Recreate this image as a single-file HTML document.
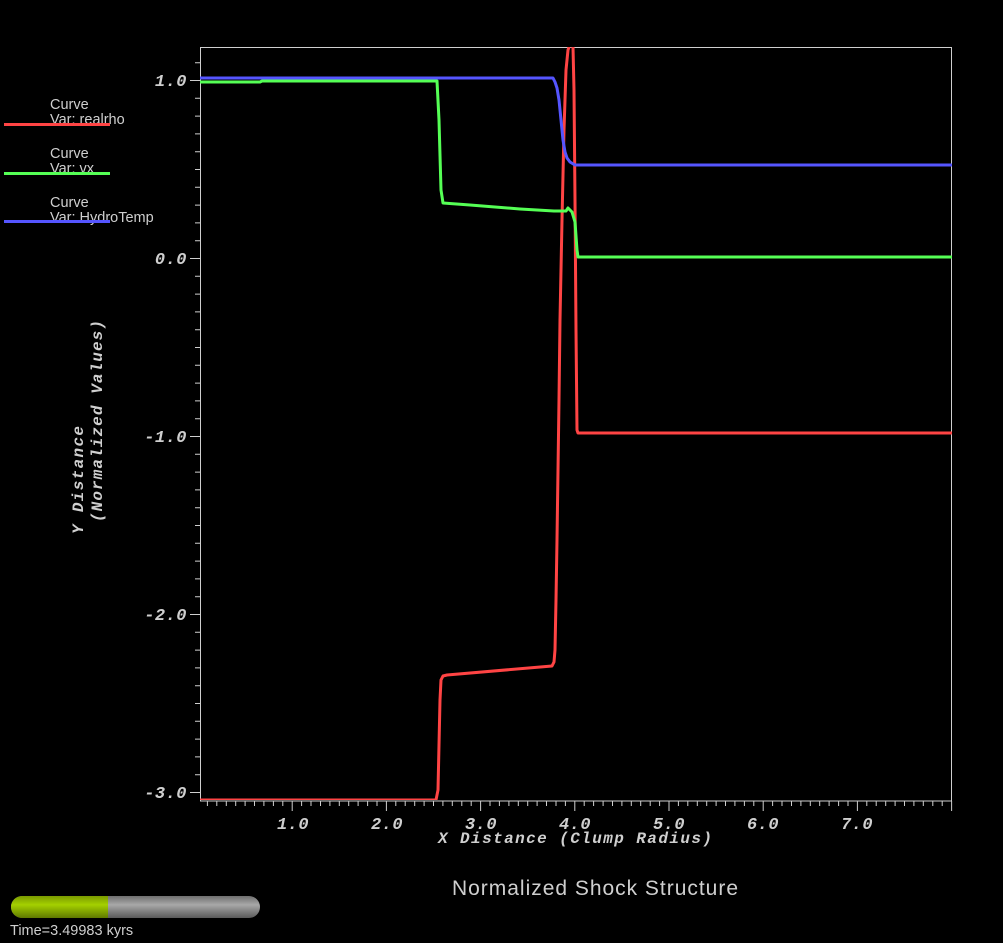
<!DOCTYPE html>
<html><head><meta charset="utf-8"><style>
html,body{margin:0;padding:0;background:#000;}
svg{display:block}
.mono{font-family:"Liberation Mono",monospace;font-weight:bold;font-style:italic;fill:#cfcfcf;}
.sans{font-family:"Liberation Sans",sans-serif;fill:#cfcfcf;}
</style></head><body>
<svg id="s" width="1003" height="943" viewBox="0 0 1003 943" xmlns="http://www.w3.org/2000/svg">
<defs>
<linearGradient id="gg" x1="0" y1="0" x2="0" y2="1">
<stop offset="0" stop-color="#6f6f6f"/><stop offset="0.4" stop-color="#a8a8a8"/><stop offset="1" stop-color="#5a5a5a"/></linearGradient>
<linearGradient id="gy" x1="0" y1="0" x2="0" y2="1">
<stop offset="0" stop-color="#7a9a00"/><stop offset="0.4" stop-color="#a4d000"/><stop offset="1" stop-color="#5f7800"/></linearGradient>
<clipPath id="pc"><rect x="200" y="47" width="752" height="753"/></clipPath>
</defs>
<g id="axes" stroke="#cfcfcf" stroke-width="1" fill="none">
<path d="M200.5 47.5H951.5V800.5M200.5 47V801H952"/>
</g>
<g clip-path="url(#pc)" fill="none" stroke-width="3" stroke-linejoin="round">
<path stroke="#ff4444" d="M200 800 L436 800 L438 790 L440 700 L441 680 L443 676 L447 675 L552 666 L554 662 L555 650 L556 600 L557 540 L558 470 L559 400 L560 320 L562 220 L564 130 L566 70 L568 50 L570 44 L573 47 L574 90 L575 200 L576 330 L577 430 L578 433 L952 433"/>
<path stroke="#55ff55" d="M200 82 L260 82 L262 81 L437 81 L439 120 L441 190 L443 203 L470 205 L520 209 L554 211 L566 211 L568 208 L572 212 L575 222 L577 250 L578 257 L952 257"/>
<path stroke="#5555ff" d="M200 78 L553 78 L555 82 L557 88 L559 100 L561 120 L563 140 L565 152 L567 158 L570 162 L575 165 L952 165"/>
</g>
<g class="mono" font-size="17" letter-spacing="0.5" text-anchor="end">
<text x="187" y="86">1.0</text>
<text x="187" y="264">0.0</text>
<text x="187" y="442">-1.0</text>
<text x="187" y="620">-2.0</text>
<text x="187" y="798">-3.0</text>
</g>
<g class="mono" font-size="17" letter-spacing="0.5" text-anchor="middle">
<text x="293" y="829">1.0</text><text x="387" y="829">2.0</text><text x="481" y="829">3.0</text><text x="575" y="829">4.0</text><text x="669" y="829">5.0</text><text x="763" y="829">6.0</text><text x="857" y="829">7.0</text>
</g>
<text class="mono" font-size="16" x="438" y="843" textLength="274">X Distance (Clump Radius)</text>
<text class="mono" font-size="16" transform="translate(83,534) rotate(-90)" textLength="108">Y Distance</text>
<text class="mono" font-size="16" transform="translate(102,522) rotate(-90)" textLength="202">(Normalized Values)</text>
<g class="sans" font-size="14.5">
<text x="50" y="109">Curve</text><text x="50" y="124">Var: realrho</text>
<text x="50" y="158">Curve</text><text x="50" y="173">Var: vx</text>
<text x="50" y="207">Curve</text><text x="50" y="222">Var: HydroTemp</text>
<text x="10" y="935">Time=3.49983 kyrs</text>
</g>
<rect x="4" y="123" width="106" height="3" fill="#ff4444"/>
<rect x="4" y="172" width="106" height="3" fill="#55ff55"/>
<rect x="4" y="220" width="106" height="3" fill="#5555ff"/>
<text class="sans" font-size="21" x="452" y="895" textLength="286">Normalized Shock Structure</text>
<rect x="11" y="896" width="249" height="22" rx="11" fill="url(#gg)"/>
<path d="M108 896 H22 A11 11 0 0 0 22 918 H108Z" fill="url(#gy)"/>
</svg>
<script>
var g=document.getElementById('axes'),d='';
for(var i=0;i<=80;i++){var x=198+i*9.42;if(x<200)continue;var L=(i%10==0)?10:5;d+='M'+x.toFixed(1)+' 801v'+L;}
for(var j=0;j<=42;j++){var y=792-j*17.8;if(y<47)break;var L=(j%10==0)?10:5;d+='M'+(200-L)+' '+(y+0.5).toFixed(1)+'h'+L;}
var p=document.createElementNS('http://www.w3.org/2000/svg','path');p.setAttribute('d',d);g.appendChild(p);
</script>
</body></html>
